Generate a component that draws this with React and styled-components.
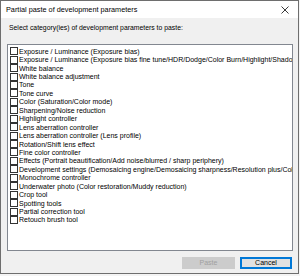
import React from 'react';
import styled, { createGlobalStyle } from 'styled-components';

const GlobalStyle = createGlobalStyle`
  html, body {
    margin: 0;
    padding: 0;
    background: #f4f4f4;
  }
  body {
    font-family: "Liberation Sans", Arial, sans-serif;
    color: #000;
  }
`;

const categories = [
  'Exposure / Luminance (Exposure bias)',
  'Exposure / Luminance (Exposure bias fine tune/HDR/Dodge/Color Burn/Highlight/Shadow)',
  'White balance',
  'White balance adjustment',
  'Tone',
  'Tone curve',
  'Color (Saturation/Color mode)',
  'Sharpening/Noise reduction',
  'Highlight controller',
  'Lens aberration controller',
  'Lens aberration controller (Lens profile)',
  'Rotation/Shift lens effect',
  'Fine color controller',
  'Effects (Portrait beautification/Add noise/blurred / sharp periphery)',
  'Development settings (Demosaicing engine/Demosaicing sharpness/Resolution plus/Color space)',
  'Monochrome controller',
  'Underwater photo (Color restoration/Muddy reduction)',
  'Crop tool',
  'Spotting tools',
  'Partial correction tool',
  'Retouch brush tool',
];

const Dialog = styled.div`
  width: 299px;
  height: 274px;
  box-sizing: border-box;
  border: 1px solid #6e6e6e;
  background: #f0f0f0;
  display: flex;
  flex-direction: column;
`;

const TitleBar = styled.div`
  height: 17px;
  background: #fff;
  display: flex;
  align-items: center;
  justify-content: space-between;
  padding: 0 9px 0 5px;
  font-size: 7.3px;
  color: #000;
`;

const CloseIcon = styled.svg`
  width: 8px;
  height: 8px;
  display: block;
`;

const Body = styled.div`
  flex: 1;
  display: flex;
  flex-direction: column;
  padding: 5px 5px 4px 6px;
`;

const Label = styled.div`
  height: 10px;
  line-height: 10px;
  font-size: 6.85px;
  padding-left: 2px;
  white-space: nowrap;
`;

// the long rows run past the right edge and are clipped, as in the original
const List = styled.div`
  margin-top: 11px;
  width: 286px;
  height: 207px;
  box-sizing: border-box;
  border: 1px solid #828790;
  background: #fff;
  padding: 2px 0 0 2px;
  overflow: hidden;
`;

const Row = styled.label`
  display: flex;
  align-items: center;
  height: 8.45px;
  white-space: nowrap;
  font-size: 7px;
`;

const Box = styled.span`
  flex: none;
  width: 8px;
  height: 8px;
  box-sizing: border-box;
  border: 1px solid #333;
  background: #fff;
  margin-right: 1px;
`;

const Footer = styled.div`
  margin-top: 6px;
  display: flex;
  justify-content: flex-end;
  gap: 5px;
  padding-right: 1px;
`;

const Button = styled.button`
  width: ${(p) => p.$w}px;
  height: 12px;
  box-sizing: border-box;
  padding: 0;
  font-family: inherit;
  font-size: 7px;
  line-height: 10px;
  border: 1px solid ${(p) => (p.$default ? '#0078d7' : '#cccccc')};
  background: ${(p) => (p.disabled ? '#cccccc' : '#e1e1e1')};
  color: ${(p) => (p.disabled ? '#a0a0a0' : '#000')};
  box-shadow: ${(p) => (p.$default ? 'inset 0 0 0 1px #0078d7' : 'none')};
`;

export default function App() {
  return (
    <>
      <GlobalStyle />
      <Dialog>
        <TitleBar>
          <span>Partial paste of development parameters</span>
          <CloseIcon viewBox="0 0 8 8">
            <path d="M0.5 0.5 L7.5 7.5 M7.5 0.5 L0.5 7.5" stroke="#222" strokeWidth="0.9" fill="none" />
          </CloseIcon>
        </TitleBar>
        <Body>
          <Label>Select category(ies) of development parameters to paste:</Label>
          <List>
            {categories.map((c) => (
              <Row key={c}>
                <Box />
                {c}
              </Row>
            ))}
          </List>
          <Footer>
            <Button $w={53} disabled>Paste</Button>
            <Button $w={52} $default>Cancel</Button>
          </Footer>
        </Body>
      </Dialog>
    </>
  );
}
